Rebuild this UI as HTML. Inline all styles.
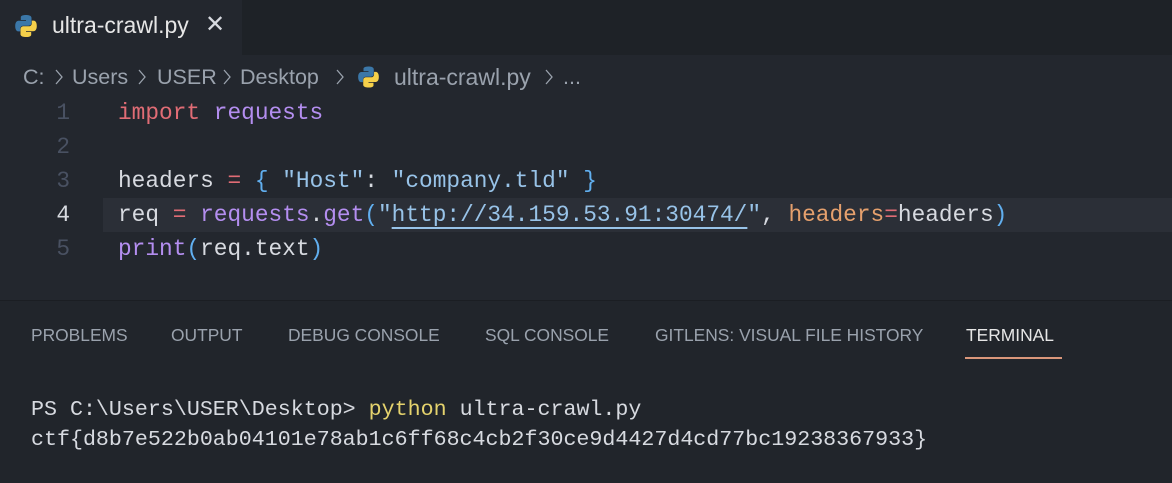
<!DOCTYPE html>
<html><head><style>
body{margin:0;width:1172px;height:482px;background:#23272e;overflow:hidden;font-family:"Liberation Sans",sans-serif;position:relative}
.tabbar{position:absolute;left:0;top:0;width:1172px;height:55px;background:#1e2227}
.tab{position:absolute;left:0;top:0;width:242px;height:55px;background:#23272e;color:#e6e6e6;font-size:23px}
.tab span{position:absolute;left:52px;top:12px}
.x{position:absolute;left:205px;top:10px;font-size:24px;color:#d7dae0}
.bc{position:absolute;top:65px;font-size:21.5px;color:#9aa2ad;white-space:pre}
.chev{position:absolute;top:68px}
.code{position:absolute;left:0;top:96px;font-family:"Liberation Mono",monospace;font-size:22.8px}
.ln{position:absolute;left:0;width:70px;text-align:right;color:#495162}
.row{position:absolute;height:34px;line-height:34px;left:0;width:1172px}
.t{position:absolute;left:118px;color:#d7dae0;white-space:pre}
.kw{color:#e06c75}.fn{color:#b48ef0}.op{color:#e06c75}.br{color:#61afef}.str{color:#98c3e8}.pa{color:#e5a06d}
.cur{background:#2b2f37;left:103px;width:1069px}
.panel{position:absolute;left:0;top:300px;width:1172px;height:182px;background:#21252b;border-top:1px solid #1b1e23}
.ptab{position:absolute;top:24px;font-size:17.4px;color:#9aa2ad}
.term{position:absolute;left:31px;font-family:"Liberation Mono",monospace;font-size:21.65px;color:#d7dae0;white-space:pre}
</style></head><body>
<div class="tabbar"><div class="tab">
<svg style="position:absolute;left:14px;top:13px" width="24" height="26" viewBox="0 0 24 24"><path d="M11.9 1C6.5 1 6.8 3.3 6.8 3.3V6h5.2v.8H4.8S1.2 6.4 1.2 12s3.1 5.4 3.1 5.4h1.9v-2.6s-.1-3.1 3.1-3.1h5.2s3 0 3-2.9V3.9S17.9 1 11.9 1z" fill="#3b77a8"/><path d="M12.1 23c5.4 0 5.1-2.3 5.1-2.3V18H12v-.8h7.2s3.6.4 3.6-5.2-3.1-5.4-3.1-5.4h-1.9v2.6s.1 3.1-3.1 3.1H9.5s-3 0-3 2.9v4.9S6.1 23 12.1 23z" fill="#f5d04a"/></svg>
<span>ultra-crawl.py</span></div><div class="x">✕</div></div>
<span class="bc" style="left:23px">C:</span>
<span class="bc" style="left:72px">Users</span>
<span class="bc" style="left:157px">USER</span>
<span class="bc" style="left:240px">Desktop</span>
<span class="bc" style="left:394px;font-size:23px;top:64px">ultra-crawl.py</span>
<span class="bc" style="left:563px">...</span>
<svg class="chev" style="left:54px" width="10" height="18"><polyline points="2,2 8,9 2,16" fill="none" stroke="#9aa2ad" stroke-width="1.3"/></svg>
<svg class="chev" style="left:137px" width="10" height="18"><polyline points="2,2 8,9 2,16" fill="none" stroke="#9aa2ad" stroke-width="1.3"/></svg>
<svg class="chev" style="left:222px" width="10" height="18"><polyline points="2,2 8,9 2,16" fill="none" stroke="#9aa2ad" stroke-width="1.3"/></svg>
<svg class="chev" style="left:335px" width="10" height="18"><polyline points="2,2 8,9 2,16" fill="none" stroke="#9aa2ad" stroke-width="1.3"/></svg>
<svg class="chev" style="left:544px" width="10" height="18"><polyline points="2,2 8,9 2,16" fill="none" stroke="#9aa2ad" stroke-width="1.3"/></svg>
<svg style="position:absolute;left:357px;top:65px" width="23" height="24" viewBox="0 0 24 24"><path d="M11.9 1C6.5 1 6.8 3.3 6.8 3.3V6h5.2v.8H4.8S1.2 6.4 1.2 12s3.1 5.4 3.1 5.4h1.9v-2.6s-.1-3.1 3.1-3.1h5.2s3 0 3-2.9V3.9S17.9 1 11.9 1z" fill="#3b77a8"/><path d="M12.1 23c5.4 0 5.1-2.3 5.1-2.3V18H12v-.8h7.2s3.6.4 3.6-5.2-3.1-5.4-3.1-5.4h-1.9v2.6s.1 3.1-3.1 3.1H9.5s-3 0-3 2.9v4.9S6.1 23 12.1 23z" fill="#f5d04a"/></svg>
<div class="code">
<div class="row" style="top:0"><span class="ln">1</span><span class="t"><span class="kw">import</span> <span class="fn">requests</span></span></div>
<div class="row" style="top:34px"><span class="ln">2</span></div>
<div class="row" style="top:68px"><span class="ln">3</span><span class="t">headers <span class="op">=</span> <span class="br">{</span> <span class="str">"Host"</span>: <span class="str">"company.tld"</span> <span class="br">}</span></span></div>
<div class="row cur" style="top:102px"></div>
<div class="row" style="top:102px"><span class="ln" style="color:#d7dae0">4</span><span class="t">req <span class="op">=</span> <span class="fn">requests</span>.<span class="fn">get</span><span class="br">(</span><span class="str">"<span style="text-decoration:underline;text-underline-offset:6px">http://34.159.53.91:30474/</span>"</span>, <span class="pa">headers</span><span class="op">=</span>headers<span class="br">)</span></span></div>
<div class="row" style="top:136px"><span class="ln">5</span><span class="t"><span class="fn">print</span><span class="br">(</span>req.text<span class="br">)</span></span></div>
</div>
<div class="panel">
<span class="ptab" style="left:31px">PROBLEMS</span>
<span class="ptab" style="left:171px">OUTPUT</span>
<span class="ptab" style="left:288px">DEBUG CONSOLE</span>
<span class="ptab" style="left:485px">SQL CONSOLE</span>
<span class="ptab" style="left:655px">GITLENS: VISUAL FILE HISTORY</span>
<span class="ptab" style="left:966px;color:#e6e6e6">TERMINAL</span>
<div style="position:absolute;left:965px;top:56px;width:97px;height:2px;background:#d9967a"></div>
<div class="term" style="top:96px">PS C:\Users\USER\Desktop&gt; <span style="color:#e5d36d">python</span> ultra-crawl.py</div>
<div class="term" style="top:126px">ctf{d8b7e522b0ab04101e78ab1c6ff68c4cb2f30ce9d4427d4cd77bc19238367933}</div>
</div>
</body></html>
